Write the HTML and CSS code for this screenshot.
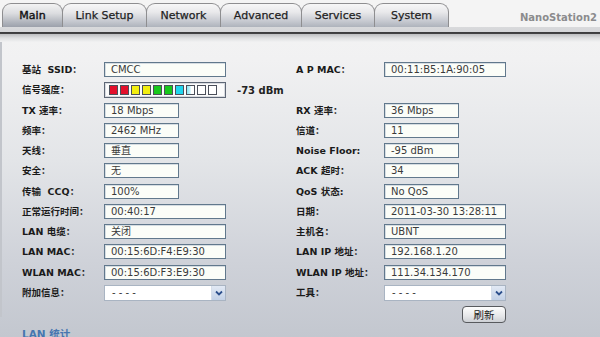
FILE: index.html
```html
<!DOCTYPE html>
<html>
<head>
<meta charset="utf-8">
<link rel="stylesheet" href="styles.css">
</head>
<body>
<div class="page">
  <div class="tabbar">
    <div class="tab tab-main active">Main</div>
    <div class="tab tab-link">Link Setup</div>
    <div class="tab tab-net">Network</div>
    <div class="tab tab-adv">Advanced</div>
    <div class="tab tab-svc">Services</div>
    <div class="tab tab-sys">System</div>
    <div class="brand">NanoStation2</div>
  </div>
  <div class="rule"></div>
  <div class="content">
    <div class="form">
      <div class="lbl">基站&nbsp; SSID：</div>
      <div class="val"><div class="box long">CMCC</div></div>
      <div class="lbl">A P MAC：</div>
      <div class="val"><div class="box long">00:11:B5:1A:90:05</div></div>

      <div class="lbl">信号强度：</div>
      <div class="val signal-cell">
        <div class="signal">
          <span class="sq red"></span><span class="sq red"></span>
          <span class="sq yel"></span><span class="sq yel"></span>
          <span class="sq grn"></span><span class="sq grn"></span>
          <span class="sq cyn"></span><span class="sq half"></span>
          <span class="sq"></span><span class="sq"></span>
        </div>
        <span class="dbm">-73 dBm</span>
      </div>
      <div class="lbl"></div>
      <div class="val"></div>

      <div class="lbl">TX 速率：</div>
      <div class="val"><div class="box short">18 Mbps</div></div>
      <div class="lbl">RX 速率：</div>
      <div class="val"><div class="box short">36 Mbps</div></div>

      <div class="lbl">频率：</div>
      <div class="val"><div class="box short">2462 MHz</div></div>
      <div class="lbl">信道：</div>
      <div class="val"><div class="box short">11</div></div>

      <div class="lbl">天线：</div>
      <div class="val"><div class="box short">垂直</div></div>
      <div class="lbl">Noise Floor:</div>
      <div class="val"><div class="box short">-95 dBm</div></div>

      <div class="lbl">安全：</div>
      <div class="val"><div class="box short">无</div></div>
      <div class="lbl">ACK 超时：</div>
      <div class="val"><div class="box short">34</div></div>

      <div class="lbl">传输&nbsp; CCQ：</div>
      <div class="val"><div class="box short">100%</div></div>
      <div class="lbl">QoS 状态:</div>
      <div class="val"><div class="box short">No QoS</div></div>

      <div class="lbl">正常运行时间：</div>
      <div class="val"><div class="box long">00:40:17</div></div>
      <div class="lbl">日期：</div>
      <div class="val"><div class="box long">2011-03-30 13:28:11</div></div>

      <div class="lbl">LAN 电缆：</div>
      <div class="val"><div class="box long">关闭</div></div>
      <div class="lbl">主机名：</div>
      <div class="val"><div class="box long">UBNT</div></div>

      <div class="lbl">LAN MAC：</div>
      <div class="val"><div class="box long">00:15:6D:F4:E9:30</div></div>
      <div class="lbl">LAN IP 地址：</div>
      <div class="val"><div class="box long">192.168.1.20</div></div>

      <div class="lbl">WLAN MAC：</div>
      <div class="val"><div class="box long">00:15:6D:F3:E9:30</div></div>
      <div class="lbl">WLAN IP 地址：</div>
      <div class="val"><div class="box long">111.34.134.170</div></div>

      <div class="lbl">附加信息：</div>
      <div class="val">
        <div class="select"><span class="sel-text">- - - -</span><span class="sel-arrow"><svg width="8" height="6" viewBox="0 0 8 6"><path d="M1 1.5 L4 4.5 L7 1.5" fill="none" stroke="#2c4f8c" stroke-width="1.8"/></svg></span></div>
      </div>
      <div class="lbl">工具：</div>
      <div class="val">
        <div class="select"><span class="sel-text">- - - -</span><span class="sel-arrow"><svg width="8" height="6" viewBox="0 0 8 6"><path d="M1 1.5 L4 4.5 L7 1.5" fill="none" stroke="#2c4f8c" stroke-width="1.8"/></svg></span></div>
      </div>

      <div class="lbl"></div>
      <div class="val"></div>
      <div class="lbl"></div>
      <div class="val btn-cell"><div class="btn">刷新</div></div>
    </div>
    <div class="section">LAN 统计</div>
  </div>
</div>
</body>
</html>
```

FILE: styles.css
```css
html, body {
  margin: 0;
  padding: 0;
}
body {
  width: 600px;
  height: 337px;
  overflow: hidden;
  font-family: "DejaVu Sans", "Noto Sans CJK SC", sans-serif;
  background: #f3f3f3;
}
.page {
  height: 337px;
  background: linear-gradient(#f4f4f4 0px, #f1f1f2 60px, #e3e5e8 160px, #cfd2d9 260px, #c3c7cf 337px);
}
.tabbar {
  display: flex;
  align-items: flex-end;
  height: 27px;
  padding-left: 2px;
  background: #f4f4f4;
}
.tab {
  box-sizing: border-box;
  height: 24px;
  margin-right: -1px;
  border: 1px solid #8e8e90;
  border-bottom: none;
  border-radius: 9px 9px 0 0;
  background: linear-gradient(#f7f7f7, #e9e9eb 35%, #c6c9d0 75%, #aeb3bc);
  font-size: 11px;
  line-height: 23px;
  color: #1f1f1f;
  text-align: center;
  -webkit-text-stroke: 0.25px #1f1f1f;
}
.tab.active {
  background: linear-gradient(#f3f3f3, #dcdde0 40%, #b0b4bc 80%, #9ca1ab);
  color: #111;
  -webkit-text-stroke: 0.4px #111;
}
.tab-main { width: 61px; }
.tab-link { width: 85px; }
.tab-net { width: 75px; }
.tab-adv { width: 82px; }
.tab-svc { width: 74px; }
.tab-sys { width: 75px; }
.brand {
  margin-left: auto;
  margin-right: 3px;
  align-self: center;
  padding-top: 7px;
  font-size: 10px;
  font-weight: bold;
  color: #8b8b8d;
}
.rule {
  height: 15px;
  background: linear-gradient(#d9dadc 0px, #d4d5d8 5px, #3a3a3c 5px, #444446 7px, #bcbdc0 7px, #dedfe1 11px, #f1f1f2 15px);
}
.content {
  padding: 20px 0 0 20px;
  border-left: 2px solid #c2c5cb;
  height: 275px;
  box-sizing: border-box;
}
.form {
  display: grid;
  grid-template-columns: 82px 192px 88px 1fr;
  grid-auto-rows: 20.25px;
}
.lbl {
  font-family: "DejaVu Sans", "Noto Sans CJK SC", sans-serif;
  font-size: 9.5px;
  font-weight: 700;
  color: #1a1a1a;
  line-height: 15px;
  white-space: nowrap;
}
.val {
  display: flex;
  align-items: flex-start;
}
.box {
  box-sizing: border-box;
  height: 15px;
  border: 1px solid #61788c;
  background: #fbfdf8;
  font-size: 10px;
  line-height: 13px;
  color: #3a3a3a;
  padding-left: 6px;
  white-space: nowrap;
  box-shadow: inset 1px 1px 0 #d6dde2;
}
.box.long { width: 122px; }
.box.short { width: 75px; }
.signal-cell {
  align-items: center;
  height: 16px;
}
.signal {
  box-sizing: border-box;
  width: 122px;
  height: 16px;
  border: 1px solid #5d6675;
  background: #fbfbfb;
  display: flex;
  align-items: center;
  padding-left: 4px;
  gap: 2px;
  box-shadow: inset 0 0 0 1px #d8dbe0;
}
.sq {
  box-sizing: border-box;
  width: 9px;
  height: 10px;
  border: 1px solid #4b4f5a;
  background: #fff;
}
.sq.red { background: #e3102c; }
.sq.yel { background: #f2ee10; }
.sq.grn { background: #18c81c; }
.sq.cyn { background: #20d6ee; }
.sq.half { background: linear-gradient(90deg, #8be6f4 0%, #c9f2fa 45%, #ffffff 60%); }
.dbm {
  margin-left: 11px;
  font-size: 10px;
  font-weight: bold;
  color: #222;
}
.select {
  box-sizing: border-box;
  width: 122px;
  height: 16px;
  border: 1px solid #a9b4c2;
  background: #fff;
  display: flex;
  align-items: center;
  justify-content: space-between;
}
.sel-text {
  padding-left: 7px;
  font-size: 10px;
  color: #333;
  line-height: 14px;
}
.sel-arrow {
  width: 13px;
  height: 14px;
  background: linear-gradient(#e2e9f4, #c3d1e6);
  display: flex;
  align-items: center;
  justify-content: center;
  border-left: 1px solid #d6dee9;
}
.btn-cell {
  padding-left: 78px;
  padding-top: 1px;
}
.btn {
  box-sizing: border-box;
  width: 44px;
  height: 17px;
  border: 1px solid #585a5e;
  border-radius: 4px;
  background: linear-gradient(#fdfdfd, #e6e7e9 60%, #cdd0d5);
  font-size: 10.5px;
  line-height: 15px;
  text-align: center;
  color: #222;
  font-family: "Noto Sans CJK SC", sans-serif;
}
.section {
  margin-top: 1px;
  font-size: 10.5px;
  font-weight: bold;
  color: #4676b0;
  font-family: "DejaVu Sans", "Noto Sans CJK SC", sans-serif;
}
```
